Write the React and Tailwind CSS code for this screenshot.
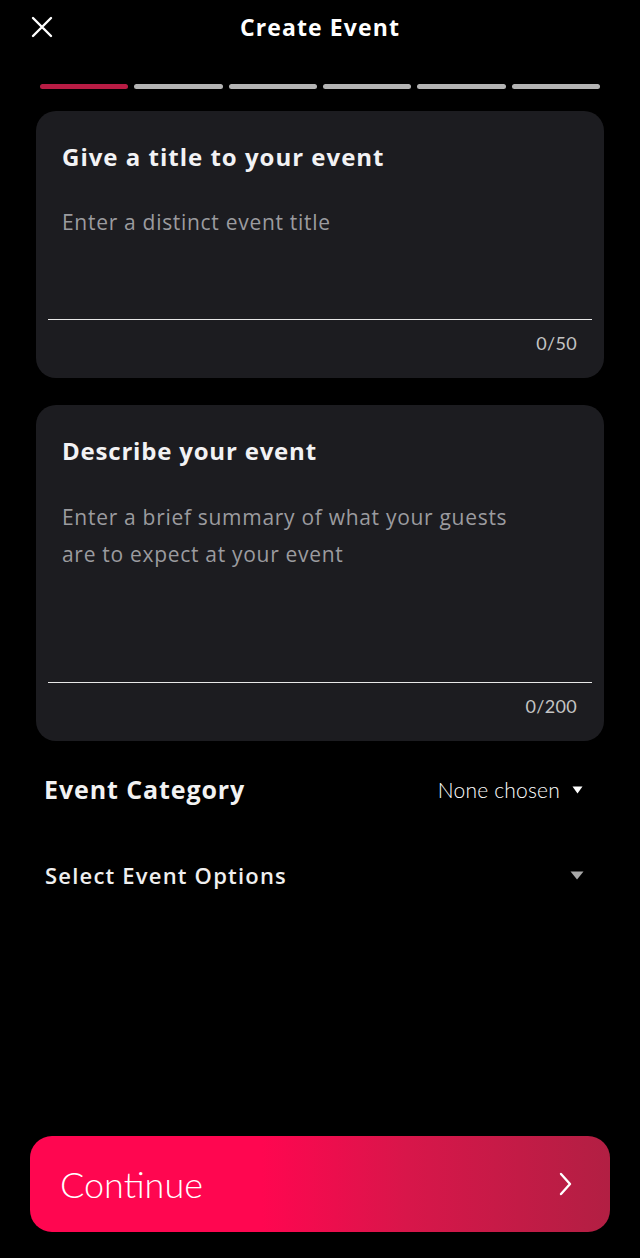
export default function App() {
  const segs = [0, 1, 2, 3, 4, 5];
  const os = { fontFamily: "'Open Sans', 'Noto Sans', sans-serif" };
  return (
    <div className="w-[640px] h-[1258px] bg-black text-white flex flex-col" style={{ fontFamily: "Lato, 'Noto Sans', sans-serif" }}>
      {/* Header */}
      <div className="relative h-[54px] flex items-center justify-center">
        <svg className="absolute left-[30px] top-[15px]" width="24" height="24" viewBox="0 0 24 24" fill="none" stroke="white" strokeWidth="2.4" strokeLinecap="round">
          <path d="M3 3 L21 21 M21 3 L3 21" />
        </svg>
        <span className="text-[23px] font-bold tracking-[1.1px]" style={os}>Create Event</span>
      </div>
      {/* Progress */}
      <div className="mt-[30px] px-[40px] flex gap-[6px]">
        {segs.map((i) => (
          <div key={i} className={`flex-1 h-[5px] rounded-full ${i === 0 ? "bg-[#b81c44]" : "bg-[#b4b4b4]"}`} />
        ))}
      </div>
      {/* Card 1 */}
      <div className="mx-[36px] mt-[22px] h-[267px] rounded-[20px] bg-[#1c1c20] flex flex-col" style={os}>
        <div className="px-[26px] pt-[30px] text-[24px] leading-[32px] font-bold tracking-[1px] text-[#f2f2f4]">Give a title to your event</div>
        <div className="px-[26px] mt-[33px] text-[21px] leading-[32px] tracking-[0.7px] text-[#9b9b9f]">Enter a distinct event title</div>
        <div className="flex-1" />
        <div className="mx-[12px] h-[1px] bg-[#e8e8e8]" />
        <div className="px-[27px] mt-[11px] mb-[23px] text-right text-[18px] leading-[24px] tracking-[0.3px] text-[#c4c4c4]" style={{ fontFamily: "Lato, sans-serif" }}>0/50</div>
      </div>
      {/* Card 2 */}
      <div className="mx-[36px] mt-[27px] h-[336px] rounded-[20px] bg-[#1c1c20] flex flex-col" style={os}>
        <div className="px-[26px] pt-[30px] text-[24px] leading-[32px] font-bold tracking-[0.8px] text-[#f2f2f4]">Describe your event</div>
        <div className="px-[26px] mt-[32px] text-[21px] leading-[37px] tracking-[0.7px] text-[#9b9b9f]">
          Enter a brief summary of what your guests<br />are to expect at your event
        </div>
        <div className="flex-1" />
        <div className="mx-[12px] h-[1px] bg-[#e8e8e8]" />
        <div className="px-[27px] mt-[11px] mb-[23px] text-right text-[18px] leading-[24px] tracking-[0.3px] text-[#c4c4c4]" style={{ fontFamily: "Lato, sans-serif" }}>0/200</div>
      </div>
      {/* Event Category */}
      <div className="mt-[33px] pl-[44px] pr-[57px] flex items-center justify-between h-[32px]">
        <span className="text-[25px] font-bold tracking-[0.9px] text-[#f2f2f2]" style={os}>Event Category</span>
        <div className="flex items-center gap-[12px]">
          <span className="text-[21px] text-white font-light tracking-[0.2px]">None chosen</span>
          <svg width="11" height="8" viewBox="0 0 11 8"><path d="M0.5 0.5 H10.5 L5.5 7.5 Z" fill="white" /></svg>
        </div>
      </div>
      {/* Select Event Options */}
      <div className="mt-[53px] pl-[45px] pr-[56px] flex items-center justify-between h-[32px]">
        <span className="text-[22px] font-semibold tracking-[1.2px] text-[#efefef]" style={os}>Select Event Options</span>
        <svg width="14" height="9" viewBox="0 0 14 9"><path d="M0.5 0.5 H13.5 L7 8.5 Z" fill="#a8a8a8" /></svg>
      </div>
      <div className="flex-1" />
      {/* Continue */}
      <div className="mx-[30px] mb-[26px] h-[96px] rounded-[22px] bg-[linear-gradient(90deg,#ff0650_0%,#ff0650_40%,#d8164a_65%,#b21f43_100%)] flex items-center justify-between pl-[30px] pr-[36px]">
        <span className="text-[36px] font-light text-white">Continue</span>
        <svg width="16" height="26" viewBox="0 0 16 26" fill="none" stroke="white" strokeWidth="2.4" strokeLinecap="round" strokeLinejoin="round">
          <path d="M3 3 L12 13 L3 23" />
        </svg>
      </div>
    </div>
  );
}
